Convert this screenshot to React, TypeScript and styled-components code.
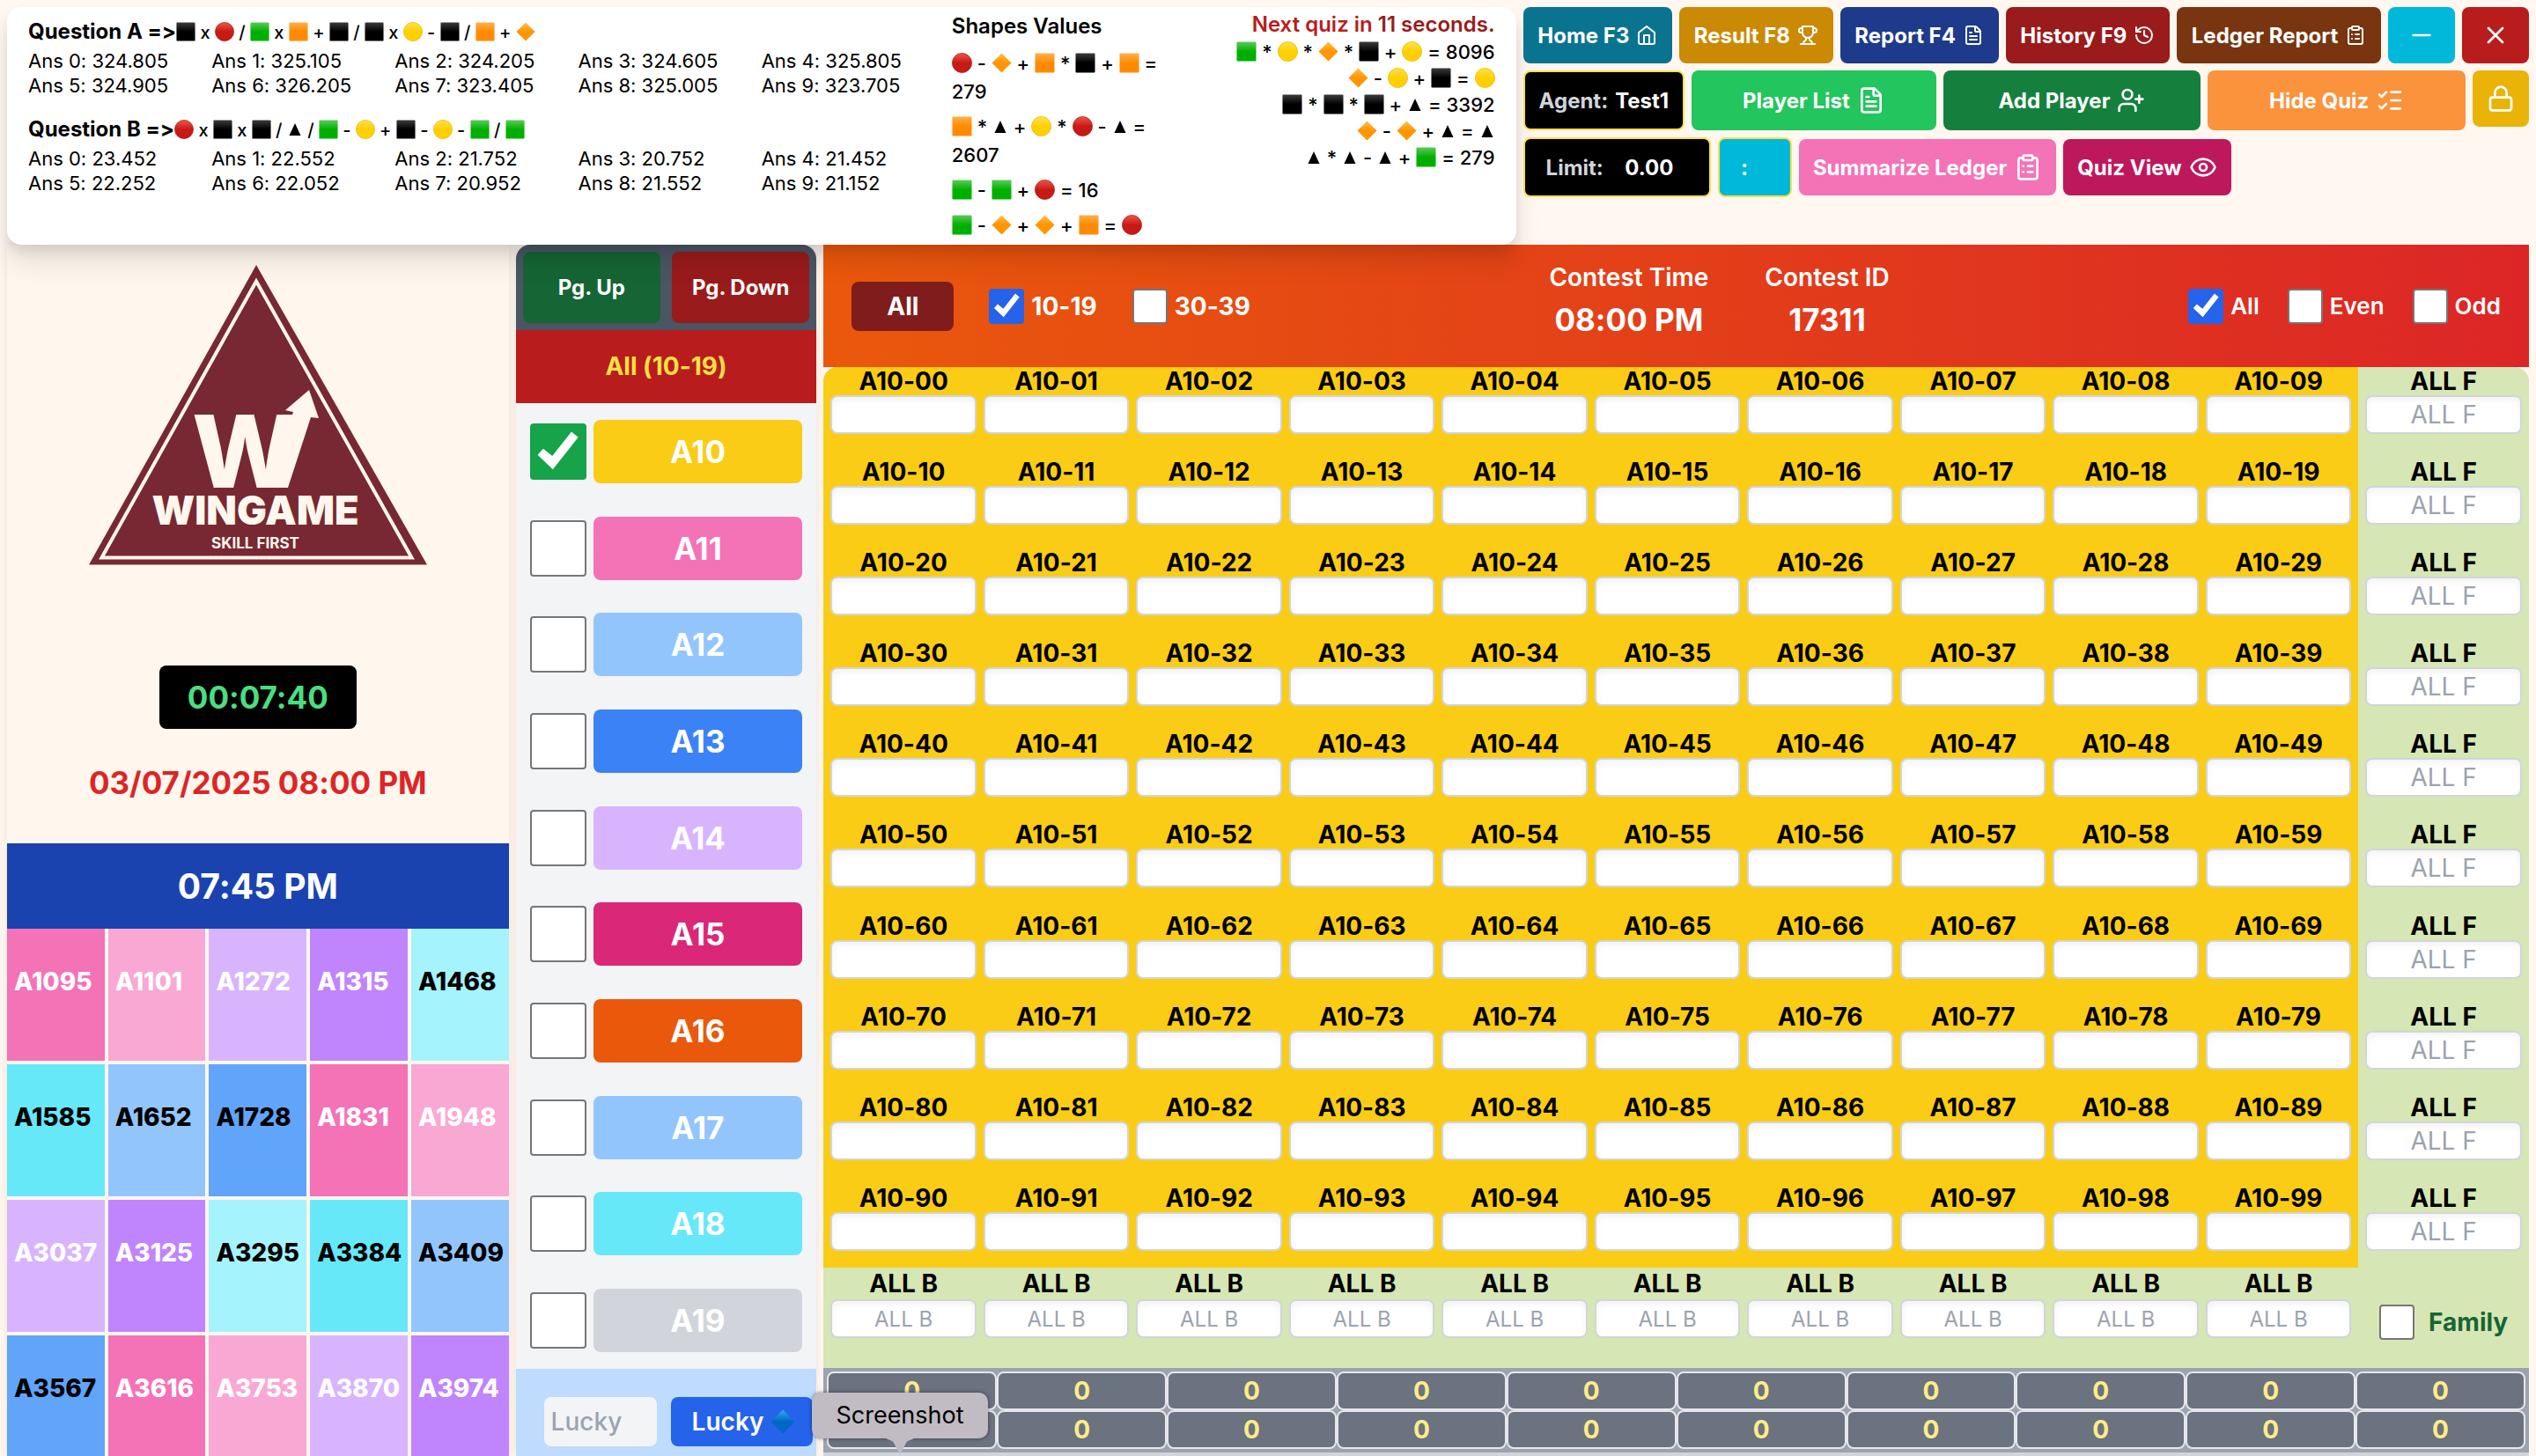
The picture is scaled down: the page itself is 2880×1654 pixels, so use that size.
import React, { useId } from "react";
import styled, { createGlobalStyle } from "styled-components";
import {
  ClipboardList,
  Eye,
  FileText,
  History,
  ListChecks,
  Lock,
  Minus,
  UserPlus,
  X,
} from "lucide-react";

const GlobalStyle = createGlobalStyle`
  *, *::before, *::after { box-sizing: border-box; }
  body {
    margin: 0;
    background: #fff7f0;
    color: #000;
    font-family: Inter, "Liberation Sans", sans-serif;
    font-size: 24px;
    font-variant-ligatures: no-contextual;
  }
  button, input { font: inherit; font-variant-ligatures: inherit; margin: 0; }
  h2, p { margin: 0; padding: 0; }
`;

/* ---------- Page frame ---------- */

const Page = styled.div`
  display: flex;
  flex-direction: column;
  height: 100vh;
  padding: 8px 8px 0;
  overflow: hidden;
`;

const TopBar = styled.header`
  display: grid;
  grid-template-columns: minmax(0, 3fr) minmax(0, 2fr);
  gap: 8px;
  position: relative;
  z-index: 1;
`;

const Main = styled.main`
  flex: 1;
  min-height: 0;
  display: grid;
  grid-template-columns: minmax(0, 5fr) minmax(0, 3fr) minmax(0, 17fr);
  gap: 8px;
`;

/* ---------- Quiz panel ---------- */

const QuizPanel = styled.section`
  display: grid;
  grid-template-columns: minmax(0, 27fr) minmax(0, 16fr);
  gap: 8px;
  height: 270px;
  padding: 4px 24px;
  border-radius: 16px;
  background: #fff;
  box-shadow: 0 20px 30px rgba(0, 0, 0, 0.1), 0 8px 12px rgba(0, 0, 0, 0.08);
`;

const Questions = styled.div`
  display: flex;
  flex-direction: column;
  gap: 20px;
  padding-top: 8px;
`;

const QuestionTitle = styled.h2`
  margin-bottom: 2px;
  font-size: 24px;
  font-weight: 700;
  line-height: 32px;
  white-space: nowrap;
`;

const Formula = styled.span<{ $compact: boolean }>`
  font-size: ${(p) => (p.$compact ? 20 : 22)}px;
  font-weight: 500;
`;

const Answers = styled.div`
  display: grid;
  grid-template-columns: repeat(5, 1fr);
  font-size: 22px;
  line-height: 28px;
`;

const Clues = styled.div`
  display: grid;
  grid-template-columns: minmax(0, 2fr) minmax(0, 3fr);
`;

const ShapeValues = styled.div`
  display: flex;
  flex-direction: column;
  gap: 8px;
  line-height: 32px;
`;

const CluesTitle = styled.h2`
  font-size: 24px;
  font-weight: 600;
  line-height: 36px;
`;

const NextQuiz = styled.div`
  text-align: right;
  line-height: 30px;
  white-space: nowrap;
`;

const Countdown = styled(CluesTitle)`
  color: #b91c1c;
  line-height: 32px;
  span { color: #991b1b; }
`;

const ShapeSvg = styled.svg<{ $compact?: boolean }>`
  width: ${(p) => (p.$compact ? 22 : 23)}px;
  height: ${(p) => (p.$compact ? 22 : 23)}px;
  vertical-align: -3px;
`;

const TriangleSvg = styled.svg`
  width: 18px;
  height: 16px;
`;

const fills: Record<string, [string, string]> = {
  K: ["#3c3c3c", "#000000"],
  G: ["#5ccb5c", "#00b000"],
  O: ["#ffb04d", "#ff8a00"],
  R: ["#f0564a", "#c81a14"],
  Y: ["#ffe24d", "#ffd000"],
  D: ["#ffc04d", "#ff9500"],
  B: ["#35a8f5", "#0068c4"],
};

function Shape({ kind, compact }: { kind: string; compact?: boolean }) {
  const id = useId();
  if (kind === "T") {
    return (
      <TriangleSvg viewBox="0 0 18 16" aria-hidden="true">
        <path d="M9 1 L15.5 15 H2.5 Z" fill="#000" />
      </TriangleSvg>
    );
  }
  const [from, to] = fills[kind];
  const paint = `url(#${id})`;
  return (
    <ShapeSvg $compact={compact} viewBox="0 0 24 24" aria-hidden="true">
      <defs>
        <linearGradient id={id} x1="0" y1="0" x2="0" y2="1">
          <stop offset="0" stopColor={from} />
          <stop offset="0.5" stopColor={to} />
        </linearGradient>
      </defs>
      {(kind === "R" || kind === "Y") && (
        <circle cx="12" cy="12" r="11.5" fill={paint} stroke={kind === "R" ? "#b01818" : "#eeb400"} strokeWidth="0.8" />
      )}
      {(kind === "D" || kind === "B") && <path d="M12 0.5 L23.5 12 L12 23.5 L0.5 12 Z" fill={paint} />}
      {"KGO".includes(kind) && <rect x="0.5" y="0.5" width="23" height="23" rx="1" fill={paint} />}
    </ShapeSvg>
  );
}

function Equation({ text, compact = false }: { text: string; compact?: boolean }) {
  return (
    <Formula $compact={compact}>
      {text
        .split(/([KGORYDT]|\d+$)/)
        .filter(Boolean)
        .map((part, i) =>
          /^[KGORYDT]$/.test(part) ? (
            <Shape key={i} kind={part} compact={compact} />
          ) : (
            <React.Fragment key={i}>{part}</React.Fragment>
          )
        )}
    </Formula>
  );
}

const questions = [
  {
    name: "Question A =>",
    formula: "K x R / G x O + K / K x Y - K / O + D",
    answers: ["324.805", "325.105", "324.205", "324.605", "325.805", "324.905", "326.205", "323.405", "325.005", "323.705"],
  },
  {
    name: "Question B =>",
    formula: "R x K x K / T / G - Y + K - Y - G / G",
    answers: ["23.452", "22.552", "21.752", "20.752", "21.452", "22.252", "22.052", "20.952", "21.552", "21.152"],
  },
];

const shapeValues = ["R - D + O * K + O = 279", "O * T + Y * R - T = 2607", "G - G + R = 16", "G - D + D + O = R"];
const nextClues = ["G * Y * D * K + Y = 8096", "D - Y + K = Y", "K * K * K + T = 3392", "D - D + T = T", "T * T - T + G = 279"];

/* ---------- Toolbar ---------- */

const Toolbar = styled.nav`
  display: flex;
  flex-direction: column;
  gap: 8px;
`;

const ToolRow = styled.div<{ $align?: string }>`
  display: flex;
  align-items: ${(p) => p.$align ?? "stretch"};
  gap: 8px;
`;

const ToolButton = styled.button<{ $color: string; $flex?: string }>`
  display: flex;
  align-items: center;
  justify-content: center;
  gap: 8px;
  flex: ${(p) => p.$flex ?? "0 0 auto"};
  min-height: 64px;
  padding: 0 16px;
  border: 0;
  border-radius: 8px;
  background: ${(p) => p.$color};
  color: #fff;
  font-weight: 700;
  white-space: nowrap;
  cursor: pointer;
`;

const IconButton = styled(ToolButton)`
  padding: 0 22px;
`;

const LockButton = styled(ToolButton)`
  align-self: flex-start;
`;

const InfoBox = styled.div<{ $color?: string; $pad: number }>`
  display: flex;
  align-items: center;
  gap: 8px;
  height: 68px;
  padding: 0 ${(p) => p.$pad}px;
  border: 2px solid #fde047;
  border-radius: 8px;
  background: ${(p) => p.$color ?? "#000"};
  color: #fff;
  font-weight: 700;
  white-space: nowrap;
`;

const InfoKey = styled.span`
  color: #d1d5db;
`;

const Amount = styled.span`
  min-width: 88px;
  text-align: center;
`;

const Colon = styled.span`
  min-width: 32px;
`;

const LineIcon = styled.svg.attrs({
  viewBox: "0 0 24 24",
  fill: "none",
  stroke: "currentColor",
  strokeWidth: 2,
  strokeLinecap: "round",
  strokeLinejoin: "round",
  "aria-hidden": true,
})`
  width: 24px;
  height: 24px;
`;

const HomeIcon = () => (
  <LineIcon>
    <path d="m3 9 9-7 9 7v11a2 2 0 0 1-2 2H5a2 2 0 0 1-2-2z" />
    <path d="M9 22V12h6v10" />
  </LineIcon>
);

const TrophyIcon = () => (
  <LineIcon>
    <path d="M6 9H4.5a2.5 2.5 0 0 1 0-5H6" />
    <path d="M18 9h1.5a2.5 2.5 0 0 0 0-5H18" />
    <path d="M4 22h16" />
    <path d="M10 14.66V17c0 .55-.47.98-.97 1.21C7.85 18.75 7 20.24 7 22" />
    <path d="M14 14.66V17c0 .55.47.98.97 1.21C16.15 18.75 17 20.24 17 22" />
    <path d="M18 2H6v7a6 6 0 0 0 12 0V2Z" />
  </LineIcon>
);

/* ---------- Left column ---------- */

const Sidebar = styled.aside`
  display: flex;
  flex-direction: column;
  min-height: 0;
  overflow: hidden;
  background: #fff7ed;
  box-shadow: 0 0 12px rgba(0, 0, 0, 0.08);
`;

const Brand = styled.div`
  flex: none;
  display: flex;
  flex-direction: column;
  align-items: center;
  height: 680px;
  padding-top: 22px;
`;

const Logo = styled.svg`
  width: 386px;
  height: 342px;
  font-family: Inter, sans-serif;
`;

const Timer = styled.div`
  margin-top: 114px;
  padding: 0 32px;
  border-radius: 8px;
  background: #000;
  color: #4ade80;
  font-size: 35px;
  font-weight: 700;
  line-height: 72px;
`;

const DrawDate = styled.p`
  margin-top: 40px;
  color: #dc2626;
  font-size: 35px;
  font-weight: 700;
  line-height: 42px;
`;

const LastDraw = styled.h2`
  flex: none;
  background: #1a43b0;
  color: #fff;
  font-size: 39px;
  font-weight: 700;
  line-height: 97px;
  text-align: center;
`;

const Results = styled.div`
  display: grid;
  grid-template-columns: repeat(5, minmax(0, 1fr));
  grid-auto-rows: 150px;
  gap: 4px;
`;

const Result = styled.div<{ $bg: string; $dark: boolean }>`
  padding: 42px 0 0 8px;
  background: ${(p) => p.$bg};
  color: ${(p) => (p.$dark ? "#000" : "#fff")};
  font-size: 28px;
  font-weight: 800;
  line-height: 36px;
`;

const resultPalette = ["#f472b6", "#f9a8d4", "#d8b4fe", "#c084fc", "#a5f3fc", "#67e8f9", "#93c5fd", "#60a5fa"];
const results = [
  "A1095", "A1101", "A1272", "A1315", "A1468",
  "A1585", "A1652", "A1728", "A1831", "A1948",
  "A3037", "A3125", "A3295", "A3384", "A3409",
  "A3567", "A3616", "A3753", "A3870", "A3974",
];

function BrandLogo() {
  return (
    <Logo viewBox="0 0 386 342" role="img" aria-label="Wingame, skill first">
      <path d="M191 1 L385 341.5 H1 Z" fill="#782832" />
      <path d="M191 19.5 L367.5 333.5 H15.5 Z" fill="none" stroke="#fff7ed" strokeWidth="4" />
      <text x="118" y="254" fontSize="114" fontWeight="800" fill="#fff7ed">W</text>
      <path d="M233 168 L224 166 L251 143 L262 175 L253 174 L227 254 L205 254 L215 225 Z" fill="#fff7ed" />
      <text x="190" y="296" fontSize="45" fontWeight="900" fill="#fff7ed" textAnchor="middle">WINGAME</text>
      <text x="190" y="323" fontSize="17" fontWeight="700" fill="#fff7ed" textAnchor="middle">SKILL FIRST</text>
    </Logo>
  );
}

/* ---------- Checkbox ---------- */

const Check = styled.input.attrs({ type: "checkbox" })<{ $size: number; $color: string }>`
  appearance: none;
  flex: none;
  width: ${(p) => p.$size}px;
  height: ${(p) => p.$size}px;
  border: 2px solid #767676;
  border-radius: 4px;
  background: #fff;

  &:checked {
    border: 0;
    background: ${(p) => p.$color};
  }

  &:checked::before {
    content: "";
    display: block;
    width: 100%;
    height: 100%;
    background: #fff;
    clip-path: polygon(14% 56%, 24% 45%, 40% 58%, 74% 15%, 86% 25%, 41% 82%);
  }
`;

/* ---------- Middle column ---------- */

const SeriesPanel = styled.section`
  display: flex;
  flex-direction: column;
  min-height: 0;
  border-radius: 16px 16px 0 0;
  background: #f3f4f6;
  box-shadow: 0 0 12px rgba(0, 0, 0, 0.08);
`;

const Pager = styled.div`
  display: grid;
  grid-template-columns: 1fr 1fr;
  gap: 13px;
  height: 97px;
  padding: 8px;
  border-radius: 16px 16px 0 0;
  background: #4b5563;
`;

const PagerButton = styled.button<{ $color: string }>`
  padding: 0;
  border: 0;
  border-radius: 8px;
  background: ${(p) => p.$color};
  color: #fff;
  font-weight: 700;
`;

const SeriesTitle = styled.h2`
  background: #b91c1c;
  color: #fde047;
  font-size: 28px;
  font-weight: 700;
  line-height: 83px;
  text-align: center;
`;

const SeriesList = styled.div`
  flex: 1;
  display: flex;
  flex-direction: column;
  padding: 0 16px;
`;

const SeriesRow = styled.div`
  flex: 1;
  display: flex;
  align-items: center;
  gap: 8px;
`;

const SeriesButton = styled.button<{ $color: string }>`
  flex: 1;
  height: 72px;
  border: 0;
  border-radius: 8px;
  background: ${(p) => p.$color};
  color: #fff;
  font-size: 35px;
  font-weight: 700;
`;

const LuckyBar = styled.div`
  display: flex;
  align-items: flex-start;
  gap: 16px;
  height: 99px;
  padding: 32px 0 0 32px;
  background: #bfdbfe;
`;

const LuckyInput = styled.input`
  width: 128px;
  height: 56px;
  padding: 0 8px;
  border: 0;
  border-radius: 8px;
  background: #f3f4f6;
  font-size: 28px;
  font-weight: 500;
  &::placeholder { color: #9ca3af; opacity: 1; }
`;

const LuckyButton = styled.button`
  display: flex;
  align-items: center;
  gap: 8px;
  height: 56px;
  padding: 0 20px 0 24px;
  border: 0;
  border-radius: 8px;
  background: #2563eb;
  color: #fff;
  font-size: 28px;
  font-weight: 600;

  svg {
    width: 28px;
    height: 28px;
  }
`;

const series: [string, string][] = [
  ["A10", "#facc15"], ["A11", "#f472b6"], ["A12", "#93c5fd"], ["A13", "#3b82f6"], ["A14", "#d8b4fe"],
  ["A15", "#db2777"], ["A16", "#ea580c"], ["A17", "#93c5fd"], ["A18", "#67e8f9"], ["A19", "#d1d5db"],
];

/* ---------- Board ---------- */

const Board = styled.section`
  display: flex;
  flex-direction: column;
  min-height: 0;
  padding-bottom: 4px;
  background: linear-gradient(#fff7f0 0 50%, #d1d5db 50%);
`;

const BoardHead = styled.div`
  display: flex;
  align-items: center;
  justify-content: space-between;
  height: 139px;
  padding: 0 32px;
  background: linear-gradient(to right, #ea580c, #dc2626);
  color: #fff;
  font-size: 28px;
  font-weight: 600;
`;

const FilterGroup = styled.div<{ $gap: number; $size: number; $weight: number }>`
  display: flex;
  align-items: center;
  gap: ${(p) => p.$gap}px;
  font-size: ${(p) => p.$size}px;
  font-weight: ${(p) => p.$weight};
`;

const AllButton = styled.button`
  width: 116px;
  height: 56px;
  border: 0;
  border-radius: 8px;
  background: #7f1d1d;
  color: #fff;
`;

const CheckLabel = styled.label<{ $gap?: number }>`
  display: flex;
  align-items: center;
  gap: ${(p) => p.$gap ?? 8}px;
`;

const ContestInfo = styled.div`
  display: flex;
  gap: 64px;
  padding-bottom: 12px;
  text-align: center;
`;

const ContestKey = styled.div`
  line-height: 42px;
`;

const ContestValue = styled.div`
  font-size: 35px;
  font-weight: 700;
  line-height: 54px;
`;

const BoardBody = styled.div`
  flex: 1;
  display: grid;
  grid-template-columns: minmax(0, 9fr) minmax(0, 1fr);
  grid-template-rows: 1fr 114px;
  overflow: hidden;
  border-radius: 16px 16px 0 0;
  background: #d6e6b4;
`;

const NumberGrid = styled.div`
  display: grid;
  grid-template-columns: repeat(10, minmax(0, 1fr));
  grid-auto-rows: 1fr;
  gap: 8px;
  padding: 0 8px;
  background: #facc15;
`;

const FrontColumn = styled.div`
  display: grid;
  grid-auto-rows: 1fr;
  gap: 8px;
  padding: 0 8px;
`;

const BackRow = styled.div`
  display: grid;
  grid-template-columns: repeat(10, minmax(0, 1fr));
  gap: 8px;
  padding: 0 8px;
`;

const FamilyCell = styled.div`
  display: flex;
  align-items: center;
  justify-content: center;
  padding-top: 10px;
  color: #166534;
  font-size: 28px;
  font-weight: 700;
`;

const Field = styled.label<{ $lead: number }>`
  display: flex;
  flex-direction: column;
  font-size: 28px;
  font-weight: 700;
  line-height: ${(p) => p.$lead}px;
  text-align: center;
`;

const FieldInput = styled.input<{ $size: number }>`
  width: 100%;
  height: 44px;
  padding: 0 8px;
  border: 2px solid #d1d5db;
  border-radius: 8px;
  background: #fff;
  box-shadow: inset 0 4px 8px rgba(0, 0, 0, 0.05);
  font-size: ${(p) => p.$size}px;
  font-weight: 400;
  text-align: center;
  &::placeholder { color: #9ca3af; opacity: 1; }
`;

const TotalsWrap = styled.div`
  padding: 4px;
  background: #9ca3af;
`;

const TotalsTable = styled.table`
  width: 100%;
  border-collapse: separate;
  border-spacing: 0;
  table-layout: fixed;

  td {
    height: 44px;
    padding: 0;
    border: 2px solid #e5e7eb;
    border-radius: 8px;
    background: #6b7280;
    color: #feec88;
    font-size: 28px;
    font-weight: 700;
    line-height: 40px;
    text-align: center;
  }
`;

/* ---------- Dock tooltip ---------- */

const Tooltip = styled.div`
  position: absolute;
  left: 922px;
  bottom: 20px;
  z-index: 2;
  width: 200px;
  border-radius: 10px;
  background: #c1bbc3;
  box-shadow: 0 0 4px rgba(0, 0, 0, 0.5);
  font-size: 27px;
  line-height: 52px;
  text-align: center;

  &::after {
    content: "";
    position: absolute;
    top: 100%;
    left: 84px;
    width: 32px;
    height: 18px;
    background: #c1bbc3;
    clip-path: polygon(0 0, 100% 0, 75% 20%, 50% 100%, 25% 20%);
  }
`;

const digits = Array.from({ length: 10 }, (_, i) => i);

export default function App() {
  return (
    <Page>
      <GlobalStyle />
      <TopBar>
        <QuizPanel>
          <Questions>
            {questions.map((q) => (
              <div key={q.name}>
                <QuestionTitle>
                  {q.name}
                  <Equation text={q.formula} compact />
                </QuestionTitle>
                <Answers>
                  {q.answers.map((a, i) => (
                    <span key={i}>{`Ans ${i}: ${a}`}</span>
                  ))}
                </Answers>
              </div>
            ))}
          </Questions>
          <Clues>
            <ShapeValues>
              <CluesTitle>Shapes Values</CluesTitle>
              {shapeValues.map((v) => (
                <div key={v}>
                  <Equation text={v} />
                </div>
              ))}
            </ShapeValues>
            <NextQuiz>
              <Countdown>
                Next quiz in <span>11 seconds.</span>
              </Countdown>
              {nextClues.map((v) => (
                <div key={v}>
                  <Equation text={v} />
                </div>
              ))}
            </NextQuiz>
          </Clues>
        </QuizPanel>

        <Toolbar>
          <ToolRow>
            <ToolButton $color="#0a7490" $flex="1 0 auto">Home F3 <HomeIcon /></ToolButton>
            <ToolButton $color="#ca8a04" $flex="1 0 auto">Result F8 <TrophyIcon /></ToolButton>
            <ToolButton $color="#1e3a8a" $flex="1 0 auto">Report F4 <FileText size={24} /></ToolButton>
            <ToolButton $color="#991b1b" $flex="1 0 auto">History F9 <History size={24} /></ToolButton>
            <ToolButton $color="#78350f" $flex="1 0 auto">Ledger Report <ClipboardList size={24} /></ToolButton>
            <IconButton $color="#00b8d9" aria-label="Minimize"><Minus size={32} /></IconButton>
            <IconButton $color="#b91c1c" aria-label="Close"><X size={32} /></IconButton>
          </ToolRow>
          <ToolRow>
            <InfoBox $pad={16}>
              <InfoKey>Agent:</InfoKey>
              <span>Test1</span>
            </InfoBox>
            <ToolButton $color="#22c55e" $flex="16 1 0">Player List <FileText size={32} /></ToolButton>
            <ToolButton $color="#15803d" $flex="17 1 0">Add Player <UserPlus size={32} /></ToolButton>
            <ToolButton $color="#fb923c" $flex="17 1 0">Hide Quiz <ListChecks size={32} /></ToolButton>
            <LockButton $color="#eab308" aria-label="Lock"><Lock size={32} /></LockButton>
          </ToolRow>
          <ToolRow $align="center">
            <InfoBox $pad={24}>
              <InfoKey>Limit:</InfoKey>
              <Amount>0.00</Amount>
            </InfoBox>
            <InfoBox $pad={24} $color="#00b8d9">
              <Colon>:</Colon>
            </InfoBox>
            <ToolButton $color="#f472b6">Summarize Ledger <ClipboardList size={32} /></ToolButton>
            <ToolButton $color="#be185d">Quiz View <Eye size={32} /></ToolButton>
          </ToolRow>
        </Toolbar>
      </TopBar>

      <Main>
        <Sidebar>
          <Brand>
            <BrandLogo />
            <Timer>00:07:40</Timer>
            <DrawDate>03/07/2025 08:00 PM</DrawDate>
          </Brand>
          <LastDraw>07:45 PM</LastDraw>
          <Results>
            {results.map((r, i) => (
              <Result key={r} $bg={resultPalette[i % 8]} $dark={i % 8 > 3}>
                {r}
              </Result>
            ))}
          </Results>
        </Sidebar>

        <SeriesPanel>
          <Pager>
            <PagerButton $color="#166534">Pg. Up</PagerButton>
            <PagerButton $color="#991b1b">Pg. Down</PagerButton>
          </Pager>
          <SeriesTitle>All (10-19)</SeriesTitle>
          <SeriesList>
            {series.map(([name, color], i) => (
              <SeriesRow key={name}>
                <Check $size={64} $color="#16a34a" defaultChecked={i === 0} aria-label={name} />
                <SeriesButton $color={color}>{name}</SeriesButton>
              </SeriesRow>
            ))}
          </SeriesList>
          <LuckyBar>
            <LuckyInput placeholder="Lucky" aria-label="Lucky" />
            <LuckyButton>
              Lucky <Shape kind="B" />
            </LuckyButton>
          </LuckyBar>
        </SeriesPanel>

        <Board>
          <BoardHead>
            <FilterGroup $gap={40} $size={28} $weight={700}>
              <AllButton>All</AllButton>
              <CheckLabel><Check $size={40} $color="#2563eb" defaultChecked />10-19</CheckLabel>
              <CheckLabel><Check $size={40} $color="#2563eb" />30-39</CheckLabel>
            </FilterGroup>
            <ContestInfo>
              <div>
                <ContestKey>Contest Time</ContestKey>
                <ContestValue>08:00 PM</ContestValue>
              </div>
              <div>
                <ContestKey>Contest ID</ContestKey>
                <ContestValue>17311</ContestValue>
              </div>
            </ContestInfo>
            <FilterGroup $gap={32} $size={26} $weight={600}>
              <CheckLabel><Check $size={40} $color="#2563eb" defaultChecked />All</CheckLabel>
              <CheckLabel><Check $size={40} $color="#2563eb" />Even</CheckLabel>
              <CheckLabel><Check $size={40} $color="#2563eb" />Odd</CheckLabel>
            </FilterGroup>
          </BoardHead>
          <BoardBody>
            <NumberGrid>
              {digits.flatMap((row) =>
                digits.map((col) => (
                  <Field key={`${row}${col}`} $lead={32}>
                    {`A10-${row}${col}`}
                    <FieldInput $size={28} />
                  </Field>
                ))
              )}
            </NumberGrid>
            <FrontColumn>
              {digits.map((row) => (
                <Field key={row} $lead={32}>
                  ALL F
                  <FieldInput $size={28} placeholder="ALL F" />
                </Field>
              ))}
            </FrontColumn>
            <BackRow>
              {digits.map((col) => (
                <Field key={col} $lead={36}>
                  ALL B
                  <FieldInput $size={24} placeholder="ALL B" />
                </Field>
              ))}
            </BackRow>
            <FamilyCell>
              <CheckLabel $gap={16}><Check $size={40} $color="#2563eb" />Family</CheckLabel>
            </FamilyCell>
          </BoardBody>
          <TotalsWrap>
            <TotalsTable>
              <tbody>
                {[0, 1].map((row) => (
                  <tr key={row}>
                    {digits.map((col) => (
                      <td key={col}>0</td>
                    ))}
                  </tr>
                ))}
              </tbody>
            </TotalsTable>
          </TotalsWrap>
        </Board>
      </Main>
      <Tooltip role="tooltip">Screenshot</Tooltip>
    </Page>
  );
}
